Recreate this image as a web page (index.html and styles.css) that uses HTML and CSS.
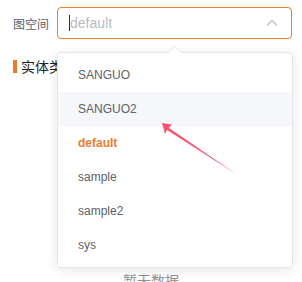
FILE: index.html
```html
<!DOCTYPE html>
<html lang="en">
<head>
    <meta charset="UTF-8">
    <title>图空间</title>
    <link rel="stylesheet" href="styles.css">
</head>
<body>
    <div class="page">
        <div class="form-row">
            <label class="form-label">图空间</label>
            <div class="select">
                <span class="cursor"></span>
                <span class="placeholder">default</span>
                <svg class="caret" width="12" height="8" viewBox="0 0 12 8">
                    <polyline points="1,6.5 6,1.5 11,6.5" fill="none" stroke="#c0c4cc" stroke-width="1.3"/>
                </svg>
            </div>
        </div>

        <div class="section-title">
            <span class="bar"></span>
            <span>实体类</span>
        </div>

        <div class="empty">暂无数据</div>

        <div class="dropdown">
            <span class="popper-arrow"></span>
            <ul class="options">
                <li>SANGUO</li>
                <li class="hover">SANGUO2</li>
                <li class="selected">default</li>
                <li>sample</li>
                <li>sample2</li>
                <li>sys</li>
            </ul>
        </div>

        <!-- annotation arrow -->
        <svg class="pointer" width="302" height="282" viewBox="0 0 302 282">
            <polygon points="162,123 172,124.5 169,128 236,174 167,130 165,134" fill="#fb5470"/>
        </svg>
    </div>
</body>
</html>
```

FILE: styles.css
```css
body {
    margin: 0;
    background-color: #ffffff;
    font-family: "Liberation Sans", Arial, "Noto Sans CJK SC", sans-serif;
}

.page {
    position: relative;
    width: 302px;
    height: 282px;
    overflow: hidden;
    padding: 7px 0 0 13px;
    box-sizing: border-box;
}

.form-row {
    display: flex;
    align-items: center;
    height: 32px;
}

.form-label {
    width: 44px;
    font-size: 12px;
    color: #606266;
}

.select {
    position: relative;
    width: 235px;
    height: 32px;
    box-sizing: border-box;
    border: 1px solid #ea7d2c;
    border-radius: 4px;
    display: flex;
    align-items: center;
    padding-left: 11px;
}

.cursor {
    width: 1px;
    height: 16px;
    background-color: #303133;
}

.placeholder {
    font-size: 14px;
    color: #b8bcc4;
}

.caret {
    position: absolute;
    right: 13px;
    top: 11px;
}

.section-title {
    display: flex;
    align-items: center;
    gap: 4px;
    margin-top: 17px;
    height: 20px;
    font-size: 14px;
    color: #1f1f1f;
}

.bar {
    width: 4px;
    height: 13px;
    background-color: #ea7d2c;
}

.empty {
    margin-top: 194px;
    margin-left: -13px;
    text-align: center;
    font-size: 14px;
    color: #909399;
}

.dropdown {
    position: absolute;
    left: 57px;
    top: 52px;
    width: 236px;
    box-sizing: border-box;
    background-color: #ffffff;
    border: 1px solid #e4e7ed;
    border-radius: 4px;
    box-shadow: 0 2px 12px 0 rgba(0, 0, 0, 0.1);
}

.popper-arrow {
    position: absolute;
    top: -7px;
    left: 111px;
    width: 0;
    height: 0;
    border-left: 6px solid transparent;
    border-right: 6px solid transparent;
    border-bottom: 6px solid #e4e7ed;
}

.popper-arrow::after {
    content: "";
    position: absolute;
    left: -6px;
    top: 1px;
    border-left: 6px solid transparent;
    border-right: 6px solid transparent;
    border-bottom: 6px solid #ffffff;
}

.options {
    list-style: none;
    margin: 0;
    padding: 5px 0;
}

.options li {
    height: 34px;
    line-height: 34px;
    padding: 0 20px;
    font-size: 12px;
    color: #606266;
}

.options li.hover {
    background-color: #f5f7fa;
}

.options li.selected {
    color: #ea7d2c;
    font-weight: bold;
}

.pointer {
    position: absolute;
    left: 0;
    top: 0;
}
```
